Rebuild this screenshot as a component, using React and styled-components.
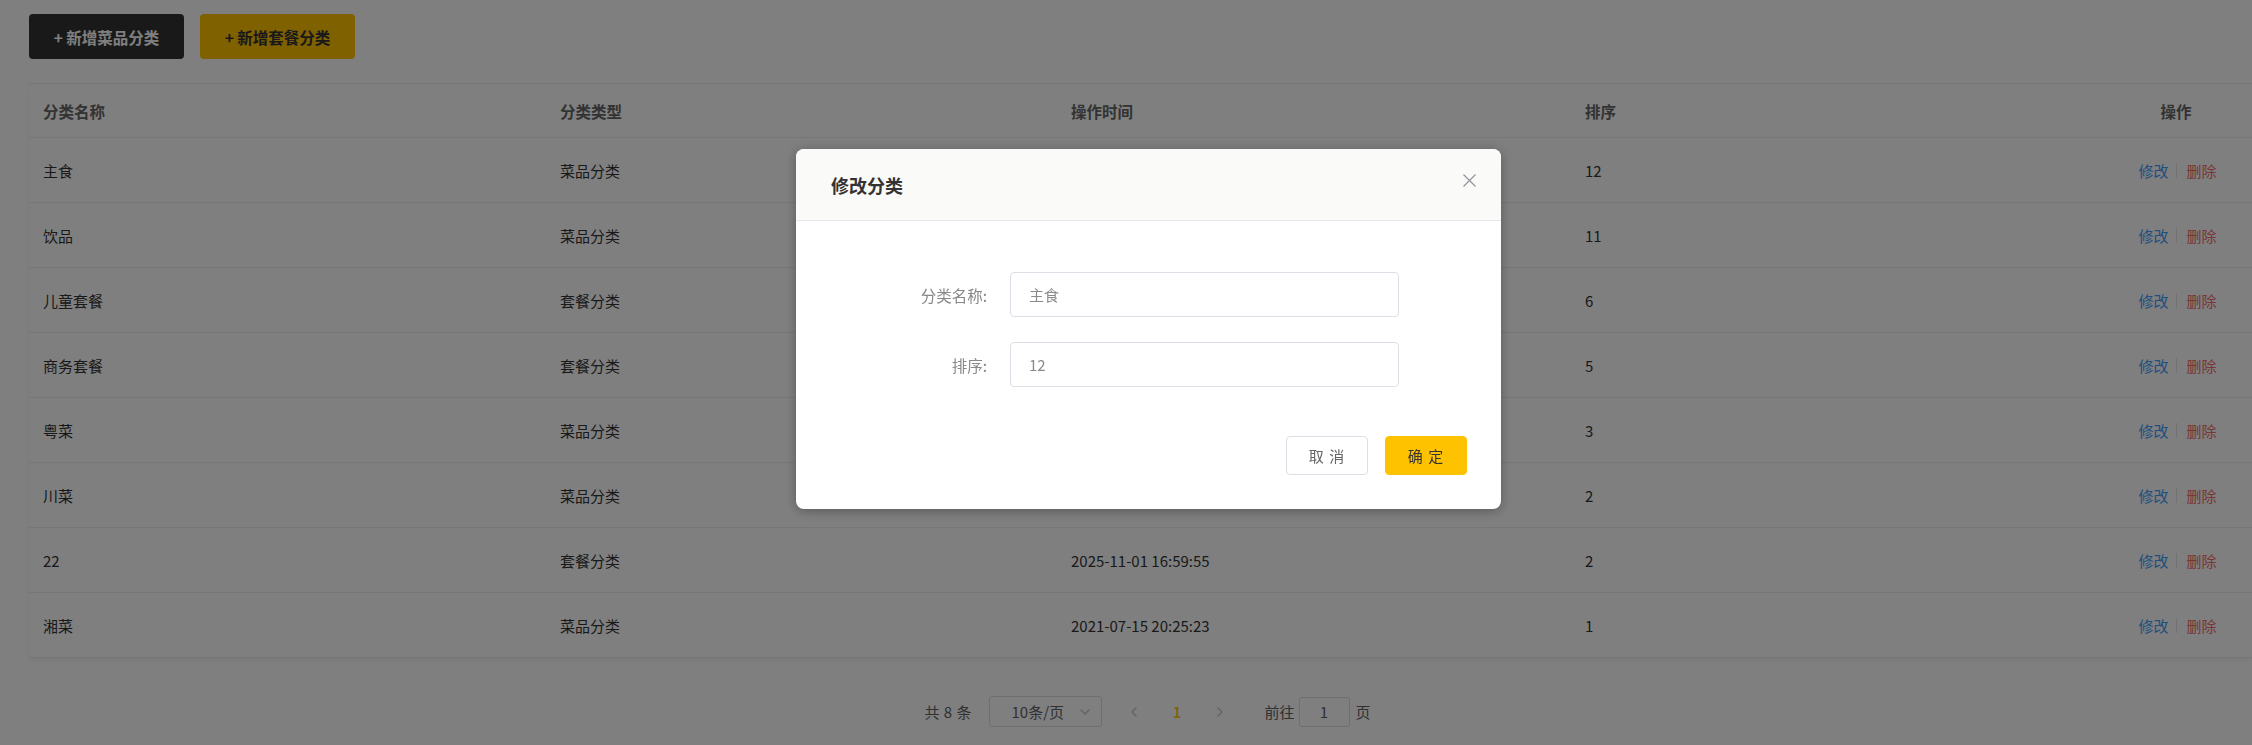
import React, { useState } from 'react';
import styled, { createGlobalStyle } from 'styled-components';

const GlobalStyle = createGlobalStyle`
  html, body {
    margin: 0;
    padding: 0;
    background: #ffffff;
    font-family: "Noto Sans CJK SC", "Noto Sans", sans-serif;
    color: #333;
  }

  * {
    box-sizing: border-box;
  }
`;

const Page = styled.div`
  padding: 14px 0 0 29px;
  min-height: 745px;
`;

const Toolbar = styled.div`
  display: flex;
  gap: 16px;
  margin-bottom: 24px;
`;

const ActionButton = styled.button`
  width: 155px;
  height: 45px;
  border: none;
  border-radius: 4px;
  font-family: inherit;
  font-size: 15.5px;
  font-weight: 700;
  cursor: pointer;
  background: ${(p) => (p.$variant === 'dark' ? '#333333' : '#ffc200')};
  color: ${(p) => (p.$variant === 'dark' ? '#ffffff' : '#333333')};
`;

const Table = styled.div`
  border-top: 1px solid #ebeef5;
  box-shadow: 0 2px 4px rgba(0, 0, 0, 0.06);
  background: #ffffff;
`;

const Row = styled.div`
  display: grid;
  grid-template-columns: 517px 511px 514px 529px 1fr;
  align-items: center;
  height: ${(p) => (p.$head ? '54px' : '65px')};
  border-bottom: 1px solid #ebeef5;
  font-size: ${(p) => (p.$head ? '15.5px' : '15px')};
  font-weight: ${(p) => (p.$head ? 700 : 400)};
  color: ${(p) => (p.$head ? '#666666' : '#333333')};
`;

const Cell = styled.div`
  padding-left: ${(p) => (p.$center ? '0' : '14px')};
  text-align: ${(p) => (p.$center ? 'center' : 'left')};
  white-space: nowrap;
`;

const OpLinks = styled.div`
  display: flex;
  justify-content: center;
  align-items: center;
  font-size: 15px;
  padding-left: 3px;
`;

const OpLink = styled.span`
  color: ${(p) => (p.$danger ? '#f56c6c' : '#419eff')};
  cursor: pointer;
`;

const Divider = styled.span`
  display: inline-block;
  width: 1px;
  height: 15px;
  background: #e4e4e4;
  margin: 0 10px 0 7px;
`;

const Pagination = styled.div`
  display: flex;
  justify-content: center;
  align-items: center;
  padding-left: 14px;
  margin-top: 38px;
  font-size: 15px;
  color: #606266;
`;

const Total = styled.span`
  margin-right: 17px;
  word-spacing: 1px;
`;

const SizeSelect = styled.div`
  width: 113px;
  height: 31px;
  border: 1px solid #dcdfe6;
  border-radius: 3px;
  display: flex;
  align-items: center;
  justify-content: space-between;
  padding: 0 11px 0 22px;
  margin-right: 11px;
`;

const PagerButton = styled.span`
  width: 43px;
  height: 31px;
  display: flex;
  align-items: center;
  justify-content: center;
  color: ${(p) => (p.$active ? '#ffc200' : '#c0c4cc')};
  font-weight: ${(p) => (p.$active ? 500 : 400)};
`;

const JumpLabel = styled.span`
  margin-left: ${(p) => (p.$first ? '23px' : '6px')};
`;

const JumpInput = styled.div`
  width: 51px;
  height: 30px;
  margin-left: 4px;
  border: 1px solid #dcdfe6;
  border-radius: 3px;
  display: flex;
  align-items: center;
  justify-content: center;
`;

const Overlay = styled.div`
  position: fixed;
  inset: 0;
  background: rgba(0, 0, 0, 0.5);
  display: flex;
  justify-content: center;
  align-items: flex-start;
  padding: 149px 0 0 45px;
`;

const Dialog = styled.div`
  width: 705px;
  height: 360px;
  background: #ffffff;
  border-radius: 8px;
  overflow: hidden;
  box-shadow: 0 2px 12px rgba(0, 0, 0, 0.3);
  display: flex;
  flex-direction: column;
`;

const DialogHeader = styled.div`
  height: 72px;
  flex-shrink: 0;
  background: #fafaf9;
  border-bottom: 1px solid #e4e7ed;
  display: flex;
  align-items: center;
  justify-content: space-between;
  padding: 0 20px 0 35px;
`;

const DialogTitle = styled.h2`
  margin: 0;
  font-size: 18px;
  font-weight: 700;
  color: #333333;
`;

const CloseButton = styled.button`
  width: 24px;
  height: 24px;
  border: none;
  padding: 0;
  background: transparent;
  display: flex;
  align-items: center;
  justify-content: center;
  cursor: pointer;
  margin-bottom: 8px;
`;

const DialogBody = styled.div`
  padding: 51px 0 0 20px;
  display: flex;
  flex-direction: column;
  gap: 25px;
`;

const FormRow = styled.div`
  display: flex;
  align-items: center;
`;

const Label = styled.label`
  width: 171px;
  text-align: right;
  font-size: 15.5px;
  color: #888888;
  margin-right: 23px;
`;

const TextInput = styled.input`
  width: 389px;
  height: 45px;
  border: 1px solid #dcdfe6;
  border-radius: 4px;
  padding: 0 18px;
  font-family: inherit;
  font-size: 15px;
  color: #8a8a8a;
  outline: none;
`;

const DialogFooter = styled.div`
  margin-top: auto;
  padding: 0 34px 34px 0;
  display: flex;
  justify-content: flex-end;
  gap: 17px;
`;

const FooterButton = styled.button`
  width: 82px;
  height: 39px;
  border-radius: 4px;
  font-family: inherit;
  font-size: 15px;
  letter-spacing: 1px;
  cursor: pointer;
  border: 1px solid ${(p) => (p.$primary ? '#ffc200' : '#dcdfe6')};
  background: ${(p) => (p.$primary ? '#ffc200' : '#ffffff')};
  color: ${(p) => (p.$primary ? '#333333' : '#666666')};
`;

const rows = [
  { name: '主食', type: '菜品分类', time: '2022-06-09 22:09:18', sort: 12 },
  { name: '饮品', type: '菜品分类', time: '2022-06-09 22:09:37', sort: 11 },
  { name: '儿童套餐', type: '套餐分类', time: '2021-07-15 20:25:39', sort: 6 },
  { name: '商务套餐', type: '套餐分类', time: '2021-07-15 20:26:05', sort: 5 },
  { name: '粤菜', type: '菜品分类', time: '2021-07-15 20:24:37', sort: 3 },
  { name: '川菜', type: '菜品分类', time: '2021-07-15 20:24:42', sort: 2 },
  { name: '22', type: '套餐分类', time: '2025-11-01 16:59:55', sort: 2 },
  { name: '湘菜', type: '菜品分类', time: '2021-07-15 20:25:23', sort: 1 },
];

const Chevron = ({ dir }) => {
  const paths = {
    down: 'M1 1l4 4 4-4',
    left: 'M5 1L1 5l4 4',
    right: 'M1 1l4 4-4 4',
  };
  const size = dir === 'down' ? { width: 10, height: 6, viewBox: '0 0 10 6' } : { width: 6, height: 10, viewBox: '0 0 6 10' };
  return (
    <svg {...size} fill="none" stroke="#c0c4cc" strokeWidth="1.3" strokeLinecap="round" strokeLinejoin="round">
      <path d={paths[dir]} />
    </svg>
  );
};

const App = () => {
  const [name, setName] = useState('主食');
  const [sort, setSort] = useState('12');

  return (
    <>
      <GlobalStyle />
      <Page>
        <Toolbar>
          <ActionButton type="button" $variant="dark">+ 新增菜品分类</ActionButton>
          <ActionButton type="button">+ 新增套餐分类</ActionButton>
        </Toolbar>

        <Table>
          <Row $head>
            <Cell>分类名称</Cell>
            <Cell>分类类型</Cell>
            <Cell>操作时间</Cell>
            <Cell>排序</Cell>
            <Cell $center>操作</Cell>
          </Row>
          {rows.map((row) => (
            <Row key={row.name}>
              <Cell>{row.name}</Cell>
              <Cell>{row.type}</Cell>
              <Cell>{row.time}</Cell>
              <Cell>{row.sort}</Cell>
              <OpLinks>
                <OpLink>修改</OpLink>
                <Divider />
                <OpLink $danger>删除</OpLink>
              </OpLinks>
            </Row>
          ))}
        </Table>

        <Pagination>
          <Total>共 8 条</Total>
          <SizeSelect>
            <span>10条/页</span>
            <Chevron dir="down" />
          </SizeSelect>
          <PagerButton>
            <Chevron dir="left" />
          </PagerButton>
          <PagerButton $active>1</PagerButton>
          <PagerButton>
            <Chevron dir="right" />
          </PagerButton>
          <JumpLabel $first>前往</JumpLabel>
          <JumpInput>1</JumpInput>
          <JumpLabel>页</JumpLabel>
        </Pagination>
      </Page>

      <Overlay>
        <Dialog>
          <DialogHeader>
            <DialogTitle>修改分类</DialogTitle>
            <CloseButton type="button" aria-label="关闭">
              <svg width="13" height="13" viewBox="0 0 13 13" fill="none" stroke="#909399" strokeWidth="1.2">
                <path d="M0.5 0.5l12 12M12.5 0.5l-12 12" />
              </svg>
            </CloseButton>
          </DialogHeader>
          <DialogBody>
            <FormRow>
              <Label>分类名称:</Label>
              <TextInput value={name} onChange={(e) => setName(e.target.value)} />
            </FormRow>
            <FormRow>
              <Label>排序:</Label>
              <TextInput value={sort} onChange={(e) => setSort(e.target.value)} />
            </FormRow>
          </DialogBody>
          <DialogFooter>
            <FooterButton type="button">取 消</FooterButton>
            <FooterButton type="button" $primary>确 定</FooterButton>
          </DialogFooter>
        </Dialog>
      </Overlay>
    </>
  );
};

export default App;
